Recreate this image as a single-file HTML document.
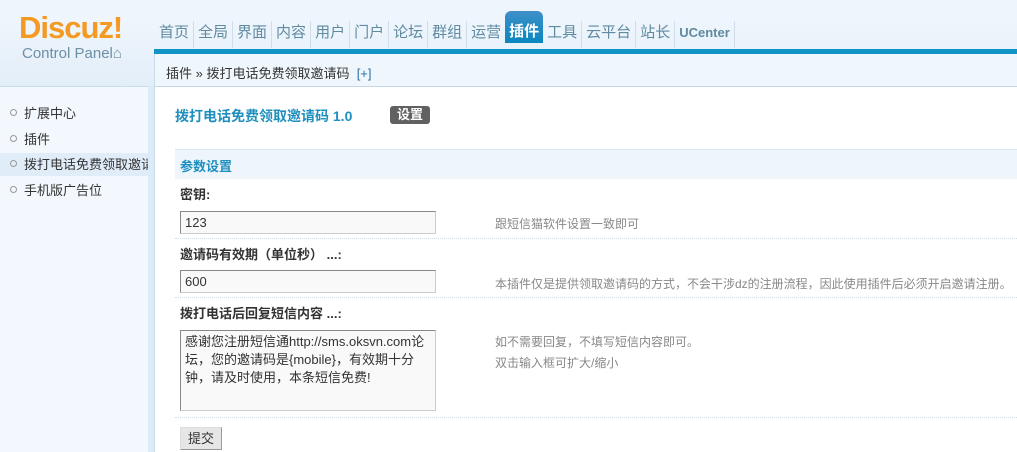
<!DOCTYPE html>
<html><head><meta charset="utf-8"><style>
*{margin:0;padding:0;box-sizing:border-box}
body{width:1017px;height:452px;overflow:hidden;background:#fff;font-family:"Liberation Sans","Noto Sans CJK SC",sans-serif;font-size:12px;color:#333;position:relative}
.abs{position:absolute}
#hd{left:0;top:0;width:1017px;height:86px;background:linear-gradient(#eef5fc 0,#eef5fc 20px,#e3eef9 86px)}
#logo{left:19px;top:10px;font:bold 31px "Liberation Sans",sans-serif;color:#f49a22;letter-spacing:-1px}
#cp{left:22px;top:45px;font-size:15px;color:#6d8fa3}
#nav{left:155px;top:21px;height:27px;display:flex}
#nav span{font-size:15px;color:#5f8aa0;padding:0 4px;line-height:24px;border-right:1px solid #d0dde8}
#nav span.on{background:linear-gradient(#3f8fc8,#0a87be);color:#fff;font-weight:bold;border-radius:6px 6px 0 0;height:32px;margin-top:-10px;padding-top:10px;line-height:22px;border:0}
#bar{left:154px;top:49px;width:863px;height:5px;background:#0e95c5}
#bc{left:154px;top:54px;width:863px;height:33px;background:#f0f7fc;border-left:1px solid #c9dbe8;border-bottom:1px solid #c3d8e3;padding:9px 0 0 11px;font-size:13px;color:#333}
#side{left:0;top:86px;width:148px;height:366px;background:#f2f8fd;border-top:1px solid #c8dce9}
#strip{left:148px;top:86px;width:7px;height:366px;background:#dcebf8;border-right:1px solid #c9dbe8}
.si{position:absolute;left:0;width:148px;height:23px;line-height:23px;padding-left:24px;font-size:13px;color:#333;white-space:nowrap;overflow:hidden}
.si:before{content:"";position:absolute;left:10px;top:7px;width:5px;height:5px;border:1px solid #999;border-radius:50%}
#title{left:175px;top:106px;font-size:14px;font-weight:bold;color:#1e8fbf}
#btn1{left:390px;top:106px;width:40px;height:18px;background:#616161;color:#fff;border-radius:3px;font-size:13px;font-weight:bold;text-align:center;line-height:18px}
#sec{left:175px;top:149px;width:842px;height:30px;background:#eef5fb;border-top:1px solid #dbe8f2;padding:6px 0 0 5px;font-weight:bold;color:#1e8fbf;font-size:13px}
.lb{left:180px;font-weight:bold;font-size:13px;color:#333}
.in{left:180px;width:256px;height:23px;border:1px solid #888;border-right-color:#ccc;border-bottom-color:#ccc;background:#f9f9f9;padding:3px 4px;font-size:13px}
.dl{left:175px;width:842px;border-top:1px dotted #ccdde8;height:0}
.hint{left:495px;color:#888;font-size:12px}
</style></head><body>
<div id="hd" class="abs"></div>
<div id="logo" class="abs">Discuz!</div>
<div id="cp" class="abs">Control Panel⌂</div>
<div id="nav" class="abs"><span>首页</span><span>全局</span><span>界面</span><span>内容</span><span>用户</span><span>门户</span><span>论坛</span><span>群组</span><span style="border:0">运营</span><span class="on">插件</span><span>工具</span><span>云平台</span><span>站长</span><span style="font-size:13px;font-weight:bold">UCenter</span></div>
<div id="bar" class="abs"></div>
<div id="bc" class="abs">插件 » 拨打电话免费领取邀请码 &nbsp;<span style="color:#2a6fa0">[+]</span></div>
<div id="side" class="abs">
<div class="si" style="top:15px">扩展中心</div>
<div class="si" style="top:41px">插件</div>
<div class="si" style="top:66px;background:#e0edf8">拨打电话免费领取邀请码</div>
<div class="si" style="top:92px">手机版广告位</div>
</div>
<div id="strip" class="abs"></div>
<div id="title" class="abs">拨打电话免费领取邀请码 1.0</div>
<div id="btn1" class="abs">设置</div>
<div id="sec" class="abs">参数设置</div>
<div class="abs lb" style="top:184px">密钥:</div>
<div class="abs in" style="top:211px">123</div>
<div class="abs hint" style="top:215px">跟短信猫软件设置一致即可</div>
<div class="abs dl" style="top:238px"></div>
<div class="abs lb" style="top:244px">邀请码有效期（单位秒） ...:</div>
<div class="abs in" style="top:270px">600</div>
<div class="abs hint" style="top:275px">本插件仅是提供领取邀请码的方式，不会干涉dz的注册流程，因此使用插件后必须开启邀请注册。</div>
<div class="abs dl" style="top:297px"></div>
<div class="abs lb" style="top:303px">拨打电话后回复短信内容 ...:</div>
<div class="abs in" style="top:330px;height:81px;line-height:18px;padding-top:2px">感谢您注册短信通http://sms.oksvn.com论坛，您的邀请码是{mobile}，有效期十分钟，请及时使用，本条短信免费!</div>
<div class="abs hint" style="top:332px;line-height:21px">如不需要回复，不填写短信内容即可。<br>双击输入框可扩大/缩小</div>
<div class="abs dl" style="top:417px"></div>
<div class="abs" style="left:180px;top:427px;width:42px;height:23px;background:#e6e6e6;border:1px solid #999;border-top-color:#ddd;border-left-color:#ddd;text-align:center;line-height:21px;font-size:13px">提交</div>
</body></html>
